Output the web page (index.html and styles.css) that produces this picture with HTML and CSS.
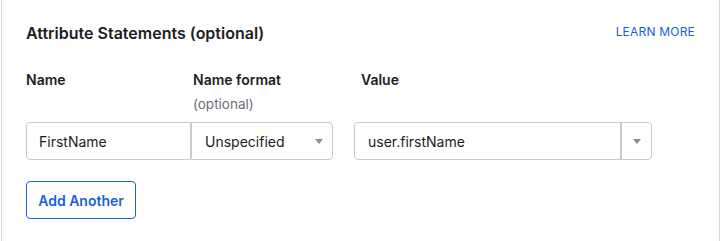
FILE: index.html
```html
<!DOCTYPE html>
<html lang="en">
<head>
    <meta charset="UTF-8">
    <title>Attribute Statements</title>
    <link rel="stylesheet" href="styles.css">
</head>
<body>
    <div class="card">
        <!-- Cabecera -->
        <div class="card-header">
            <h2 class="titulo">Attribute Statements (optional)</h2>
            <a class="learn-more" href="#">LEARN MORE</a>
        </div>

        <div class="campos">
            <div class="etiqueta etiqueta-name">Name</div>
            <div class="etiqueta etiqueta-format">Name format<span class="opcional">(optional)</span></div>
            <div class="hueco"></div>
            <div class="etiqueta etiqueta-value">Value</div>

            <div class="input input-name">FirstName</div>
            <div class="input select-format">
                <span>Unspecified</span>
                <span class="flecha"></span>
            </div>
            <div class="hueco"></div>
            <div class="input combo-value">
                <span class="combo-texto">user.firstName</span>
                <span class="combo-boton"><span class="flecha"></span></span>
            </div>
        </div>

        <button class="boton-add">Add Another</button>
    </div>
</body>
</html>
```

FILE: styles.css
```css
body {
    margin: 0;
    background: #fff;
    font-family: Inter, "Noto Sans", sans-serif;
    color: #1d1d21;
}

.card {
    margin: 0 1px;
    height: 241px;
    box-sizing: border-box;
    border-left: 1px solid #d7d7dc;
    border-right: 1px solid #d7d7dc;
    padding: 22px 24px 0 24px;
}

.card-header {
    display: flex;
    justify-content: space-between;
    align-items: center;
    height: 22px;
}

.titulo {
    margin: 0;
    font-size: 16px;
    font-weight: 600;
    line-height: 22px;
}

.learn-more {
    color: #1662dd;
    text-decoration: none;
    font-size: 12px;
    letter-spacing: 0.2px;
    margin-top: -4px;
}

/* Rejilla de campos */
.campos {
    display: grid;
    grid-template-columns: 165px 142px 21px 298px;
    grid-template-rows: 44px 38px;
    row-gap: 8px;
    margin-top: 26px;
}

.etiqueta {
    font-size: 14px;
    font-weight: 600;
    line-height: 20px;
}

.etiqueta-format {
    padding-left: 2px;
}

.etiqueta-value {
    padding-left: 7px;
}

.opcional {
    display: block;
    margin-top: 4px;
    font-weight: 400;
    font-size: 13.5px;
    color: #6e6e78;
}

.input {
    box-sizing: border-box;
    height: 38px;
    border: 1px solid #c9c9cf;
    display: flex;
    align-items: center;
    font-size: 14px;
    padding-left: 12px;
}

.input-name {
    border-radius: 4px 0 0 4px;
}

.select-format {
    border-radius: 0 4px 4px 0;
    justify-content: space-between;
    padding-left: 13px;
    padding-right: 9px;
}

.combo-value {
    border-radius: 4px;
    padding-left: 13px;
}

.combo-texto {
    flex: 1;
}

.combo-boton {
    width: 29px;
    height: 36px;
    border-left: 2px solid #c9c9cf;
    display: flex;
    align-items: center;
    justify-content: center;
}

.flecha {
    width: 0;
    height: 0;
    border-left: 4px solid transparent;
    border-right: 4px solid transparent;
    border-top: 5px solid #8c8c96;
}

.boton-add {
    margin-top: 21px;
    width: 110px;
    height: 38px;
    background: #fff;
    border: 1px solid #1662dd;
    border-radius: 4px;
    color: #1662dd;
    font-family: inherit;
    font-size: 14px;
    font-weight: 600;
    cursor: pointer;
}
```
